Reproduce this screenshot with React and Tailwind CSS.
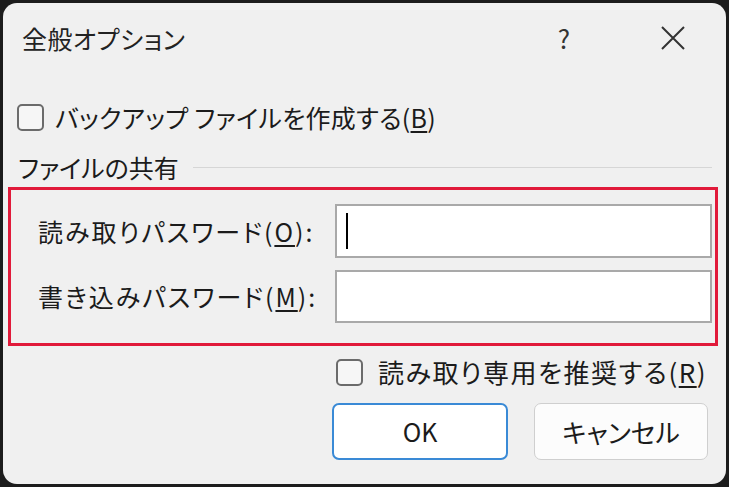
import React from 'react';

const font = { fontFamily: '"Noto Sans CJK JP", "Noto Sans", sans-serif' };

const Check = () => (
  <span className="block w-[27px] h-[27px] shrink-0 rounded-[5px] border-2 border-[#6b6b6b] bg-[#f6f6f6]" />
);

const Key = ({ children }) => <span className="underline underline-offset-[3px] decoration-[1.5px]">{children}</span>;

const App = () => {
  return (
    <div
      className="w-[729px] h-[487px] bg-[#1c1c1c] p-[3px] text-[#1b1b1b] [font-feature-settings:'palt'] text-[25px] leading-none"
      style={font}
    >
      <div className="h-full rounded-[14px] bg-[#f0f0f0] flex flex-col overflow-hidden">
        {/* title bar */}
        <div className="h-[70px] shrink-0 flex items-center pl-[19px] pr-[40px]">
          <span className="text-[25px] tracking-[0.5px] text-[#222]">全般オプション</span>
          <span className="ml-auto text-[26px] text-[#333] mr-[90px]">?</span>
          <svg width="26" height="26" viewBox="0 0 26 26" className="text-[#333]">
            <path d="M2 2 L24 24 M24 2 L2 24" stroke="currentColor" strokeWidth="2" />
          </svg>
        </div>

        {/* backup checkbox */}
        <div className="mt-[30px] h-[28px] flex items-center gap-[11px] pl-[14px]">
          <Check />
          <span className="tracking-[0.3px]">
            バックアップ ファイルを作成する(<Key>B</Key>)
          </span>
        </div>

        {/* group heading */}
        <div className="mt-[21px] h-[30px] flex items-center pl-[15px] pr-[14px]">
          <span>ファイルの共有</span>
          <span className="ml-[14px] flex-1 h-px bg-[#d6d6d6]" />
        </div>

        {/* highlighted group */}
        <div className="mt-[5px] ml-[5px] mr-[8px] border-[3px] border-[#e11a3a] pt-[14px] pb-[20px] pl-[27px] pr-[3px] flex flex-col gap-[12px]">
          <div className="flex items-center">
            <span className="w-[297px] shrink-0 tracking-[2px]">
              読み取りパスワード(<Key>O</Key>):
            </span>
            <div className="flex-1 h-[54px] border-2 border-[#a9a9a9] bg-white flex items-center pl-[9px]">
              <span className="block w-[2px] h-[36px] bg-black" />
            </div>
          </div>
          <div className="flex items-center">
            <span className="w-[297px] shrink-0 tracking-[2px]">
              書き込みパスワード(<Key>M</Key>):
            </span>
            <div className="flex-1 h-[53px] border-2 border-[#a9a9a9] bg-white" />
          </div>
        </div>

        {/* read-only recommended */}
        <div className="mt-[12px] h-[28px] flex items-center gap-[15px] pl-[333px]">
          <Check />
          <span className="text-[26px] tracking-[1.5px] whitespace-nowrap">
            読み取り専用を推奨する(<Key>R</Key>)
          </span>
        </div>

        {/* buttons */}
        <div className="mt-[17px] flex gap-[26px] pl-[329px]">
          <button className="w-[176px] h-[57px] rounded-[7px] border-2 border-[#3a8ad6] bg-white text-[25px] text-[#1b1b1b] flex items-center justify-center">
            OK
          </button>
          <button className="w-[174px] h-[57px] rounded-[7px] border border-[#cfcfcf] bg-[#fcfcfc] text-[26px] text-[#1b1b1b] flex items-center justify-center">
            キャンセル
          </button>
        </div>
      </div>
    </div>
  );
};

export default App;
